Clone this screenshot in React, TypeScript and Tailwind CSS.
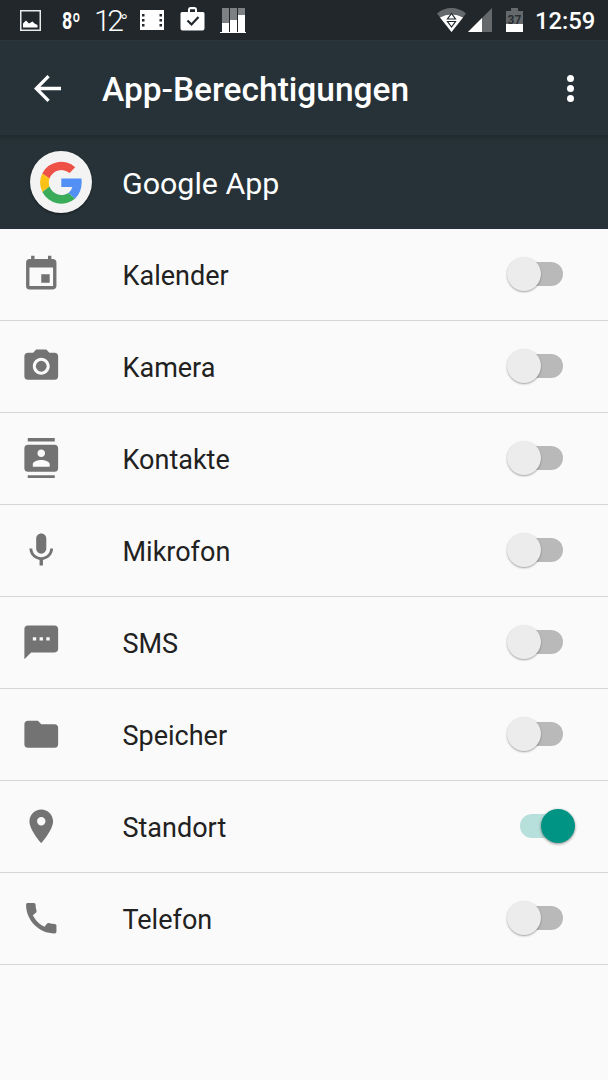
import { useState } from "react";
import type { IconType } from "react-icons";
import {
  MdCall,
  MdContacts,
  MdEvent,
  MdFolder,
  MdMic,
  MdPhotoCamera,
  MdPlace,
  MdSms,
} from "react-icons/md";

type Permission = {
  name: string;
  icon: IconType;
  granted: boolean;
};

const initialPermissions: Permission[] = [
  { name: "Kalender", icon: MdEvent, granted: false },
  { name: "Kamera", icon: MdPhotoCamera, granted: false },
  { name: "Kontakte", icon: MdContacts, granted: false },
  { name: "Mikrofon", icon: MdMic, granted: false },
  { name: "SMS", icon: MdSms, granted: false },
  { name: "Speicher", icon: MdFolder, granted: false },
  { name: "Standort", icon: MdPlace, granted: true },
  { name: "Telefon", icon: MdCall, granted: false },
];

function StatusBar() {
  return (
    <div className="flex h-10 shrink-0 items-start bg-[#21272b] pl-5 pr-[13px] text-white">
      <svg className="mt-[10px] h-[21px] w-[21px] shrink-0" viewBox="0 0 21 21">
        <rect x="0.75" y="0.75" width="19.5" height="19.5" fill="none" stroke="#e8e9e9" strokeWidth="1.5" />
        <path d="M3 17.5v-4l3-3 3 3 3.5-2 2 2 3 1.5v2.5z" fill="#fff" />
      </svg>
      <span className="ml-[21px] mt-[8px] w-[18px] shrink-0 origin-left scale-x-[0.78] whitespace-nowrap text-[23px] font-bold leading-[27px]">
        8º
      </span>
      <span className="ml-[14px] mt-[4px] w-[34px] shrink-0 origin-left whitespace-nowrap text-[30px] font-light leading-[34px] tracking-[-3.5px]">
        12<span className="relative top-[-2px] text-[21px] leading-none">°</span>
      </span>
      <svg className="ml-[12px] mt-[10px] h-[20px] w-[24px] shrink-0" viewBox="0 0 24 20">
        <path d="M0 0h24v20H0z" fill="#fff" />
        <path
          d="M2 4h2.5v2.5H2zM2 9h2.5v2.5H2zM2 14h2.5v2.5H2zM19.5 4H22v2.5h-2.5zM19.5 9H22v2.5h-2.5zM19.5 14H22v2.5h-2.5z"
          fill="#21272b"
        />
      </svg>
      <svg className="ml-[16px] mt-[7px] h-[24px] w-[25px] shrink-0" viewBox="0 0 25 24">
        <path
          d="M2 5h6V2.5Q8 0 10.3 0h4.4Q17 0 17 2.5V5h6q1.5 0 1.5 1.5V21.5q0 2-2 2h-20q-2 0-2-2V6.5Q.5 5 2 5zM10 5h5V2.2h-5z"
          fill="#fff"
          fillRule="evenodd"
        />
        <path d="M7.5 13.5l4 4 7-7.5" fill="none" stroke="#21272b" strokeWidth="2.2" />
      </svg>
      <svg className="ml-[15px] mt-[8px] h-[25px] w-[26px] shrink-0" viewBox="0 0 26 25">
        <path d="M2 0h7v23H2zM10 0h7v23h-7zM18 0h7v23h-7z" fill="#7d8184" />
        <path d="M2 15h7v9H2zM10 12h7v12h-7zM18 7h7v17h-7zM0 24h26v1H0z" fill="#fff" />
      </svg>

      <svg className="ml-auto mt-[8px] h-[24px] w-[29px] shrink-0" viewBox="0 0 29 24">
        <path d="M14.5 24L0 5.5Q6.5 0 14.5 0t14.5 5.5z" fill="#65696c" />
        <path d="M14.5 24L3 9.5Q8.5 6.5 14.5 6.5t11.5 3z" fill="#fff" />
        <path
          d="M14.5 5.5l4 5.5h-8zM14.5 19l-4-5.5h8z"
          fill="#fff"
          stroke="#21272b"
          strokeWidth="1.2"
        />
      </svg>
      <svg className="ml-[2px] mt-[8px] h-[24px] w-[24px] shrink-0" viewBox="0 0 24 24">
        <path d="M0 24L24 0v24z" fill="#65696c" />
        <path d="M0 24L14 10v14z" fill="#fff" />
      </svg>
      <svg className="ml-[14px] mt-[8px] h-[24px] w-[17px] shrink-0" viewBox="0 0 17 24">
        <path d="M5 0h7v3h5v21H0V3h5z" fill="#65696c" />
        <path d="M0 16h17v8H0z" fill="#fff" />
        <text x="8.5" y="16" textAnchor="middle" fontSize="12" fontWeight="700" fill="#2a2f33">
          37
        </text>
      </svg>
      <span className="ml-[12px] mt-[7px] w-[60px] shrink-0 whitespace-nowrap text-[23.8px] font-medium leading-[28px]">
        12:59
      </span>
    </div>
  );
}

function GoogleLogo() {
  return (
    <div className="flex h-[62px] w-[62px] shrink-0 items-center justify-center rounded-full bg-[#f3f3f3] shadow-[0_1px_2px_rgba(0,0,0,0.5)]">
      <svg className="h-[43px] w-[42px]" viewBox="0 0 42 43">
        <path d="M2.2 12.5A21 21 0 0 1 35.2 6.3L29.6 12.1A12.7 12.7 0 0 0 9.5 17.4z" fill="#ee5145" />
        <path d="M2.2 12.5A21 21 0 0 0 2.4 30.9L9.5 25.5A12.7 12.7 0 0 1 9.5 17.4z" fill="#fbc116" />
        <path d="M2.4 30.9A21 21 0 0 0 35.2 37.4L28.4 32A12.7 12.7 0 0 1 9.5 25.5z" fill="#3aab58" />
        <path d="M21.3 17.5H41.4Q43 30 35.2 37.4L28.4 32Q31.6 29.8 32.3 26H21.3z" fill="#5290f5" />
      </svg>
    </div>
  );
}

function Switch({ checked, label, onChange }: { checked: boolean; label: string; onChange: () => void }) {
  return (
    <button
      role="switch"
      aria-checked={checked}
      aria-label={label}
      onClick={onChange}
      className="relative mb-px h-[34px] w-[68px] shrink-0"
    >
      <span
        className={`absolute top-[5px] h-[24px] rounded-full ${
          checked ? "left-[13px] w-[50px] bg-[#b7dfdb]" : "left-[6px] w-[49.5px] bg-[#b9b9b9]"
        }`}
      />
      <span
        className={`absolute top-0 h-[34px] w-[34px] rounded-full ${
          checked
            ? "left-[34px] bg-[#009485] shadow-[0_1px_3px_rgba(0,0,0,0.45)]"
            : "left-0 bg-[#ececec] shadow-[0_1px_2px_rgba(0,0,0,0.35)]"
        }`}
      />
    </button>
  );
}

export default function App() {
  const [permissions, setPermissions] = useState(initialPermissions);

  const toggle = (name: string) => {
    setPermissions((prev) => prev.map((p) => (p.name === name ? { ...p, granted: !p.granted } : p)));
  };

  return (
    <div className="flex h-[1080px] w-[608px] flex-col overflow-hidden bg-[#fafafa] font-[Roboto,sans-serif]">
      <StatusBar />

      <header className="flex h-[95px] shrink-0 items-center border-t border-[#2b353a] bg-[#263238] pl-[34px] pr-[34px] text-white">
        <button aria-label="Zurück" className="shrink-0">
          <svg className="h-[27px] w-[27px]" viewBox="0 0 27 27">
            <path d="M27 13.5H2.5M14.6 1.2L2.3 13.5l12.3 12.3" fill="none" stroke="#fff" strokeWidth="3.3" />
          </svg>
        </button>
        <h1 className="ml-[41px] mt-[4px] whitespace-nowrap text-[33.5px] font-medium leading-[40px]">
          App-Berechtigungen
        </h1>
        <button aria-label="Weitere Optionen" className="ml-auto flex flex-col gap-[3px]">
          <span className="h-[7px] w-[7px] rounded-full bg-white" />
          <span className="h-[7px] w-[7px] rounded-full bg-white" />
          <span className="h-[7px] w-[7px] rounded-full bg-white" />
        </button>
      </header>

      <div className="flex h-[94px] shrink-0 items-center bg-[#263238] bg-linear-to-b from-[#20292e] to-[#263238] to-[6px] pl-[30px] text-white">
        <GoogleLogo />
        <span className="ml-[30px] mt-[4px] text-[30.4px] leading-[36px]">Google App</span>
      </div>

      <ul>
        {permissions.map((permission) => (
          <li key={permission.name} className="flex h-[92px] items-center border-b border-[#d5d5d5] pl-[21px] pr-[33px]">
            <permission.icon className="mb-px h-[40.5px] w-[40.5px] shrink-0 text-[#737373]" />
            <span className="ml-[61px] mt-[3px] flex-1 text-[27px] leading-[32px] text-[#212121]">
              {permission.name}
            </span>
            <Switch
              checked={permission.granted}
              label={permission.name}
              onChange={() => toggle(permission.name)}
            />
          </li>
        ))}
      </ul>
    </div>
  );
}
